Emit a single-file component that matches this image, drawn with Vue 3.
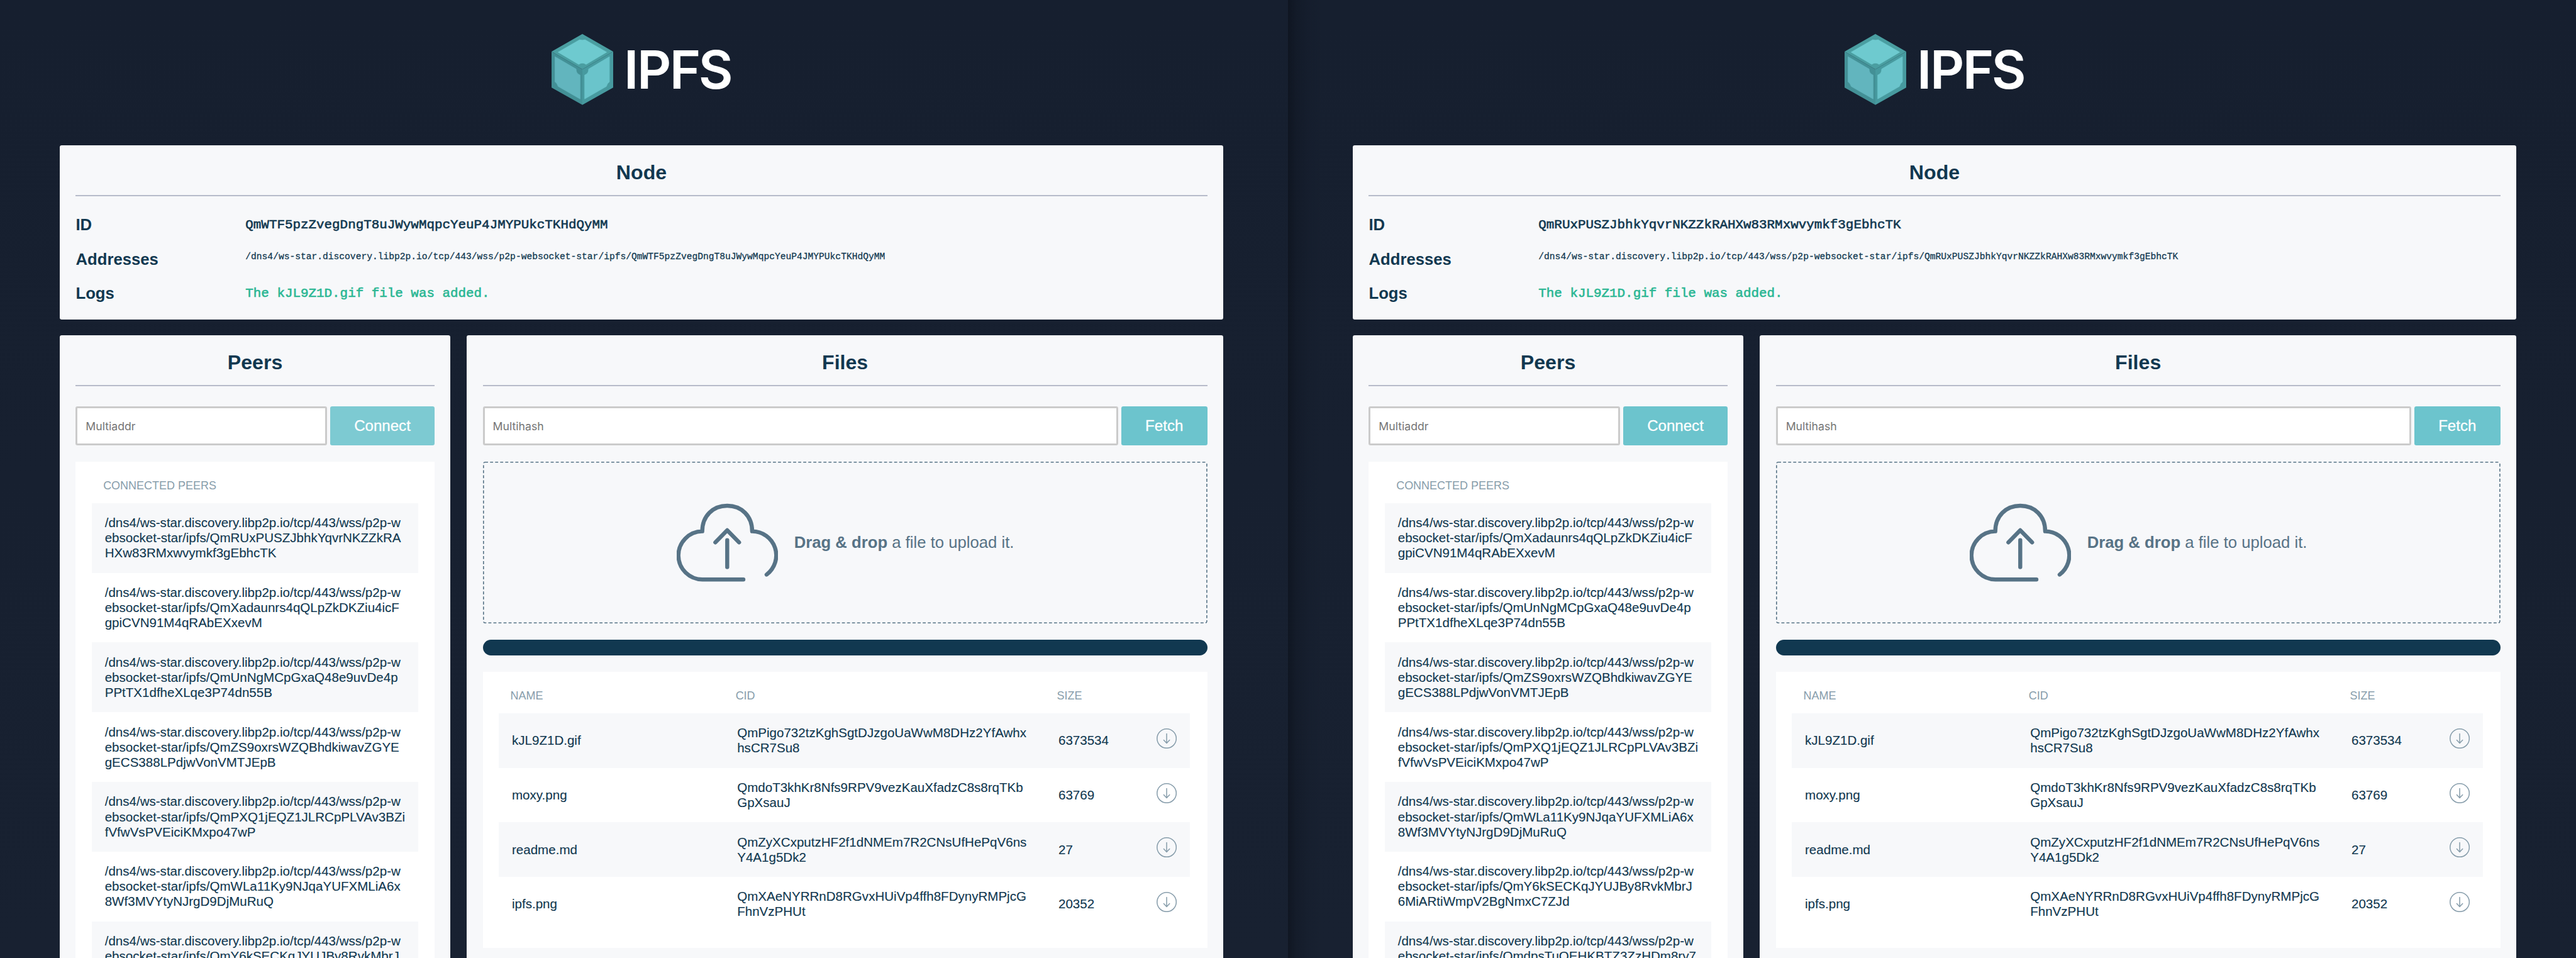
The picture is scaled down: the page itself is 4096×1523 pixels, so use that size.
<script setup>
const address = '/dns4/ws-star.discovery.libp2p.io/tcp/443/wss/p2p-websocket-star/ipfs/'
const peerLines = (second, third) => [
  '/dns4/ws-star.discovery.libp2p.io/tcp/443/wss/p2p-w',
  'ebsocket-star/ipfs/' + second,
  third,
]

const peers = {
  rux: peerLines('QmRUxPUSZJbhkYqvrNKZZkRA', 'HXw83RMxwvymkf3gEbhcTK'),
  xad: peerLines('QmXadaunrs4qQLpZkDKZiu4icF', 'gpiCVN91M4qRAbEXxevM'),
  unn: peerLines('QmUnNgMCpGxaQ48e9uvDe4p', 'PPtTX1dfheXLqe3P74dn55B'),
  zs9: peerLines('QmZS9oxrsWZQBhdkiwavZGYE', 'gECS388LPdjwVonVMTJEpB'),
  pxq: peerLines('QmPXQ1jEQZ1JLRCpPLVAv3BZi', 'fVfwVsPVEiciKMxpo47wP'),
  wla: peerLines('QmWLa11Ky9NJqaYUFXMLiA6x', '8Wf3MVYtyNJrgD9DjMuRuQ'),
  y6k: peerLines('QmY6kSECKqJYUJBy8RvkMbrJ', '6MiARtiWmpV2BgNmxC7ZJd'),
  dps: peerLines('QmdpsTuQEHKBTZ3ZzHDm8ry7', ''),
}

const nodes = [
  {
    id: 'QmWTF5pzZvegDngT8uJWywMqpcYeuP4JMYPUkcTKHdQyMM',
    hover: true,
    peers: [peers.rux, peers.xad, peers.unn, peers.zs9, peers.pxq, peers.wla, peers.y6k],
  },
  {
    id: 'QmRUxPUSZJbhkYqvrNKZZkRAHXw83RMxwvymkf3gEbhcTK',
    hover: false,
    peers: [peers.xad, peers.unn, peers.zs9, peers.pxq, peers.wla, peers.y6k, peers.dps],
  },
]

const files = [
  { name: 'kJL9Z1D.gif', cid: ['QmPigo732tzKghSgtDJzgoUaWwM8DHz2YfAwhx', 'hsCR7Su8'], size: '6373534' },
  { name: 'moxy.png', cid: ['QmdoT3khKr8Nfs9RPV9vezKauXfadzC8s8rqTKb', 'GpXsauJ'], size: '63769' },
  { name: 'readme.md', cid: ['QmZyXCxputzHF2f1dNMEm7R2CNsUfHePqV6ns', 'Y4A1g5Dk2'], size: '27' },
  { name: 'ipfs.png', cid: ['QmXAeNYRRnD8RGvxHUiVp4ffh8FDynyRMPjcG', 'FhnVzPHUt'], size: '20352' },
]
</script>

<template>
  <div class="desktop">
    <main v-for="node in nodes" :key="node.id" class="window">
      <header class="brand">
        <svg class="logo" viewBox="0 0 357 141">
          <path fill="#4a9ea1" d="M61 0 122 35 61 70 0 35Z" />
          <path fill="#439096" d="M0 35 61 70V140.4L0 106Z" />
          <path fill="#479a9f" d="M122 35 61 70V140.4L122 106Z" />
          <g stroke-width="1" stroke-linejoin="round">
            <path fill="#6ecacf" stroke="#6ecacf" d="M13 36 55.5 11.6Q61 13 66.5 11.6L109 36 68.3 60.2A12.3 12.3 0 0 0 53.7 60.2Z" />
            <path fill="#62b5be" stroke="#62b5be" d="M6.9 45 48.6 69.4A12.3 12.3 0 0 0 56.4 81.4V128.6L13 103.8Q11.5 97.5 6.9 94.8Z" />
            <path fill="#6ac4cb" stroke="#6ac4cb" d="M114.5 45 73.4 69.4A12.3 12.3 0 0 1 65.6 81.4V128.6L108.6 103.8Q110 97.5 114.5 94.8Z" />
          </g>
          <text class="wordmark" y="108.4" x="143.300 169.300 233.800 291">IPFS</text>
        </svg>
      </header>

      <section class="card node">
        <h1>Node</h1>
        <hr />
        <div class="facts">
          <div class="fact"><b>ID</b><code>{{ node.id }}</code></div>
          <div class="fact"><b>Addresses</b><code class="small">{{ address + node.id }}</code></div>
          <div class="fact"><b>Logs</b><code class="success">The kJL9Z1D.gif file was added.</code></div>
        </div>
      </section>

      <div class="columns">
        <section class="card peers">
          <h1>Peers</h1>
          <hr />
          <div class="form">
            <div class="input">Multiaddr</div>
            <div class="button connect" :class="{ hover: node.hover }">Connect</div>
          </div>
          <div class="panel">
            <div class="head"><span>CONNECTED PEERS</span></div>
            <div v-for="(peer, i) in node.peers" :key="i" class="row peer">
              <div>
                <div v-for="(line, j) in peer" :key="j" class="line">{{ line }}</div>
              </div>
            </div>
          </div>
        </section>

        <section class="card files">
          <h1>Files</h1>
          <hr />
          <div class="form">
            <div class="input">Multihash</div>
            <div class="button fetch">Fetch</div>
          </div>
          <div class="dropzone">
            <svg class="outline"><rect class="dash" /></svg>
            <svg class="cloud" viewBox="0 0 200 156" fill="none" stroke="#577386" stroke-width="8" stroke-linecap="round" stroke-linejoin="round">
              <path d="M132 151H51.5A47.6 47.6 0 0 1 50.6 55.6C50.6 25 72 5 100 5S149.4 25 149.4 55.6A47.6 47.6 0 0 1 178 141.3" />
              <path d="M100 73V126.500M76.500 77.500 100 53.500 123.500 77.500" />
            </svg>
            <p><strong>Drag &amp; drop</strong> a file to upload it.</p>
          </div>
          <div class="progress"></div>
          <div class="panel">
            <div class="head grid"><span>NAME</span><span>CID</span><span>SIZE</span></div>
            <div v-for="file in files" :key="file.name" class="row grid">
              <div>{{ file.name }}</div>
              <div>
                <div v-for="line in file.cid" :key="line" class="line">{{ line }}</div>
              </div>
              <div>{{ file.size }}</div>
              <svg class="download" viewBox="0 0 40 40" fill="none" stroke="#879dab" stroke-width="1.9" stroke-linecap="round" stroke-linejoin="round">
                <circle cx="20" cy="20" r="19" />
                <path d="M20 10.500V29M14.200 23 20 29.200 25.800 23" />
              </svg>
            </div>
          </div>
        </section>
      </div>
    </main>
  </div>
</template>

<style>
/* 1rem is a tenth of 1/510 of the two-window desktop */
html {
  font-size: 8.03137px;
}
body {
  overflow: hidden;
  background: #161f2f;
}
</style>

<style scoped>
.desktop {
  display: flex;
  width: 4096px;
  height: 1523px;
  overflow: hidden;
  background: linear-gradient(#161f2f, #182131);
  color: #113850;
  font-family: 'Liberation Sans', Arial, sans-serif;
  box-sizing: border-box;
}
.desktop * {
  box-sizing: border-box;
}
.window {
  flex: 0 0 255rem;
  padding: 0 12.8rem 0 11.8rem;
}
.window + .window {
  padding: 0 11.8rem 0 12.8rem;
  background: linear-gradient(90deg, rgba(5, 8, 14, 0.42), rgba(5, 8, 14, 0.2) 1.6rem, rgba(5, 8, 14, 0.06) 4.2rem, transparent 7rem) no-repeat;
}
.brand {
  display: flex;
  justify-content: center;
  height: 28.8rem;
  padding-top: 6.73rem;
}
.logo {
  width: 35.7rem;
  height: 14.1rem;
  overflow: visible;
}
.wordmark {
  fill: #fff;
  font: 600 105px Inter, sans-serif;
}
.card {
  padding: 3.11rem 3.2rem 0;
  background: #f7f8fa;
  border-radius: 0.4rem;
}
h1 {
  margin: 0 0 2.09rem;
  font-size: 4rem;
  line-height: 4.6rem;
  text-align: center;
}
hr {
  height: 0.2rem;
  margin: 0;
  border: 0;
  background: #b7bbca;
}
.node {
  height: 34.4rem;
}
.facts {
  padding-top: 3.9rem;
}
.fact {
  display: flex;
  align-items: flex-start;
  height: 6.8rem;
  font-size: 3.2rem;
  line-height: 3.6rem;
}
.fact b {
  width: 33.6rem;
}
code {
  margin-top: 0.36rem;
  font: 2.6rem/3rem 'Liberation Mono', 'Courier New', monospace;
  white-space: nowrap;
  -webkit-text-stroke: 0.03em;
}
code.small {
  margin-top: 0.25rem;
  font-size: 1.82rem;
  line-height: 2.1rem;
  -webkit-text-stroke: 0.02em;
}
code.success {
  color: #2bb794;
}
.columns {
  display: flex;
  gap: 3.2rem;
  height: 130rem;
  margin-top: 3.2rem;
}
.peers {
  flex: 0 0 77.4rem;
}
.files {
  flex: 1;
}
.form {
  display: flex;
  gap: 0.6rem;
  height: 7.8rem;
  margin: 4rem 0 3.2rem;
}
.input {
  flex: 1;
  padding-left: 1.6rem;
  border: 0.4rem solid #cbcbcb;
  border-radius: 0.4rem;
  background: #fff;
  color: #757575;
  font-family: Inter, sans-serif;
  font-size: 2.2rem;
  line-height: 7.2rem;
}
.button {
  border-radius: 0.4rem;
  background: #6cc4cd;
  color: #fff;
  font-size: 3rem;
  line-height: 7.8rem;
  text-align: center;
  -webkit-text-stroke: 0.012em;
}
.button.hover {
  background: #7dcad2;
}
.connect {
  width: 20.6rem;
}
.fetch {
  width: 17rem;
}
.panel {
  padding: 3.2rem;
  background: #fff;
}
.peers .panel {
  height: 130rem;
}
.head {
  height: 5rem;
  color: #879dab;
  font-size: 2.24rem;
  line-height: 3rem;
}
.head span {
  padding-left: 2.24rem;
}
.row {
  padding: 2.4rem 0;
  font-size: 2.56rem;
  line-height: 3rem;
  white-space: nowrap;
  -webkit-text-stroke: 0.006em;
}
.row > div {
  padding-left: 2.56rem;
}
.row:nth-child(even) {
  background: #f7f8fa;
}
.peer {
  height: 13.8rem;
}
.line {
  height: 3rem;
}
.grid {
  display: grid;
  grid-template-columns: 44.6rem 63.6rem 22rem 4rem;
  width: 136.8rem;
}
.row.grid {
  align-items: center;
  height: 10.8rem;
}
.download {
  width: 4rem;
  height: 4rem;
  margin-top: -0.8rem;
}
.dropzone {
  position: relative;
  display: flex;
  align-items: center;
  justify-content: center;
  gap: 3.2rem;
  height: 32rem;
  color: #577386;
}
.outline {
  position: absolute;
  inset: 0;
  width: 100%;
  height: 100%;
}
.dash {
  x: 0.1rem;
  y: 0.1rem;
  width: calc(100% - 0.2rem);
  height: calc(100% - 0.2rem);
  rx: 0.3rem;
  fill: none;
  stroke: #577386;
  stroke-width: 0.2rem;
  stroke-dasharray: 0.6rem 0.4rem;
}
.cloud {
  width: 20rem;
  height: 15.6rem;
}
p {
  margin: 0 -0.2rem 0 0;
  font-size: 3.2rem;
  line-height: 3.6rem;
}
.progress {
  height: 3.2rem;
  margin: 3.2rem 0;
  border-radius: 1.6rem;
  background: #113850;
}
</style>
